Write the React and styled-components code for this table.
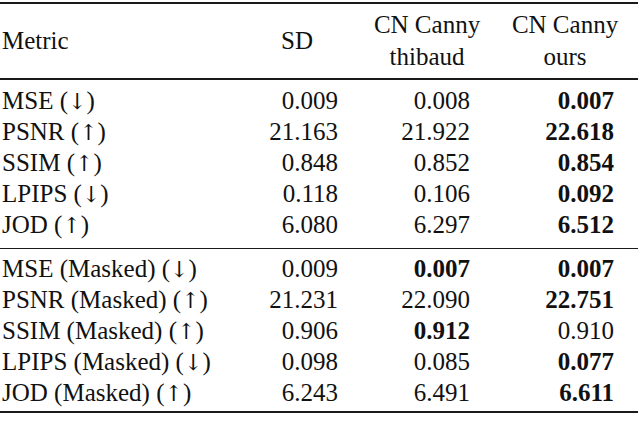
import React from 'react';
import styled, { createGlobalStyle } from 'styled-components';

const Global = createGlobalStyle`
  html, body {
    margin: 0;
    padding: 0;
    background: #ffffff;
  }
`;

const Table = styled.div`
  width: 638px;
  font-family: "Liberation Serif", "Times New Roman", serif;
  font-size: 25px;
  color: #111111;
`;

const Rule = styled.div`
  height: ${(p) => p.thick}px;
  background: #1a1a1a;
  margin-top: ${(p) => p.top || 0}px;
`;

const Block = styled.div`
  padding: ${(p) => p.pad || '5px 0'};
`;

const Row = styled.div`
  display: grid;
  grid-template-columns: 1fr 116px 116px 116px;
  column-gap: 16px;
  padding: 0 15px 0 2px;
  height: ${(p) => p.h || 31}px;
  align-items: center;
`;

const Label = styled.div`
  white-space: nowrap;
`;

const Arrow = styled.span`
  font-family: "DejaVu Serif", serif;
  font-size: 22px;
  color: #111111;
`;

const Head = styled.div`
  display: flex;
  flex-direction: column;
  align-items: center;
  line-height: 32px;
  white-space: nowrap;
  transform: translateX(${(p) => p.shift || 0}px);
`;

const Num = styled.div`
  text-align: right;
  padding-right: ${(p) => p.pad}px;
  font-weight: ${(p) => (p.bold ? 700 : 400)};
  white-space: nowrap;
`;

const pads = [21, 21, 9];

const top = [
  ['MSE', 'down', '0.009', '0.008', '0.007', 3],
  ['PSNR', 'up', '21.163', '21.922', '22.618', 3],
  ['SSIM', 'up', '0.848', '0.852', '0.854', 3],
  ['LPIPS', 'down', '0.118', '0.106', '0.092', 3],
  ['JOD', 'up', '6.080', '6.297', '6.512', 3],
];

const masked = [
  ['MSE (Masked)', 'down', '0.009', '0.007', '0.007', [2, 3]],
  ['PSNR (Masked)', 'up', '21.231', '22.090', '22.751', 3],
  ['SSIM (Masked)', 'up', '0.906', '0.912', '0.910', 2],
  ['LPIPS (Masked)', 'down', '0.098', '0.085', '0.077', 3],
  ['JOD (Masked)', 'up', '6.243', '6.491', '6.611', 3],
];

function DataRow({ row }) {
  const [label, dir, a, b, c, best] = row;
  const bestCols = Array.isArray(best) ? best : [best];
  return (
    <Row>
      <Label>
        {label} (<Arrow>{dir === 'up' ? '\u2191\uFE0E' : '\u2193\uFE0E'}</Arrow>)
      </Label>
      {[a, b, c].map((v, i) => (
        <Num key={i} pad={pads[i]} bold={bestCols.includes(i + 1)}>
          {v}
        </Num>
      ))}
    </Row>
  );
}

export default function App() {
  return (
    <>
      <Global />
      <Table>
        <Rule thick={2} top={2} />
        <Block pad="4px 0 4px">
          <Row h={66}>
            <Label>Metric</Label>
            <Head shift={-4}>SD</Head>
            <Head shift={-6}>
              <span>CN Canny</span>
              <span>thibaud</span>
            </Head>
            <Head>
              <span>CN Canny</span>
              <span>ours</span>
            </Head>
          </Row>
        </Block>
        <Rule thick={2} />
        <Block pad="5px 0 8px">
          {top.map((r) => (
            <DataRow key={r[0]} row={r} />
          ))}
        </Block>
        <Rule thick={1} />
        <Block pad="4px 0 3px">
          {masked.map((r) => (
            <DataRow key={r[0]} row={r} />
          ))}
        </Block>
        <Rule thick={2} />
      </Table>
    </>
  );
}
